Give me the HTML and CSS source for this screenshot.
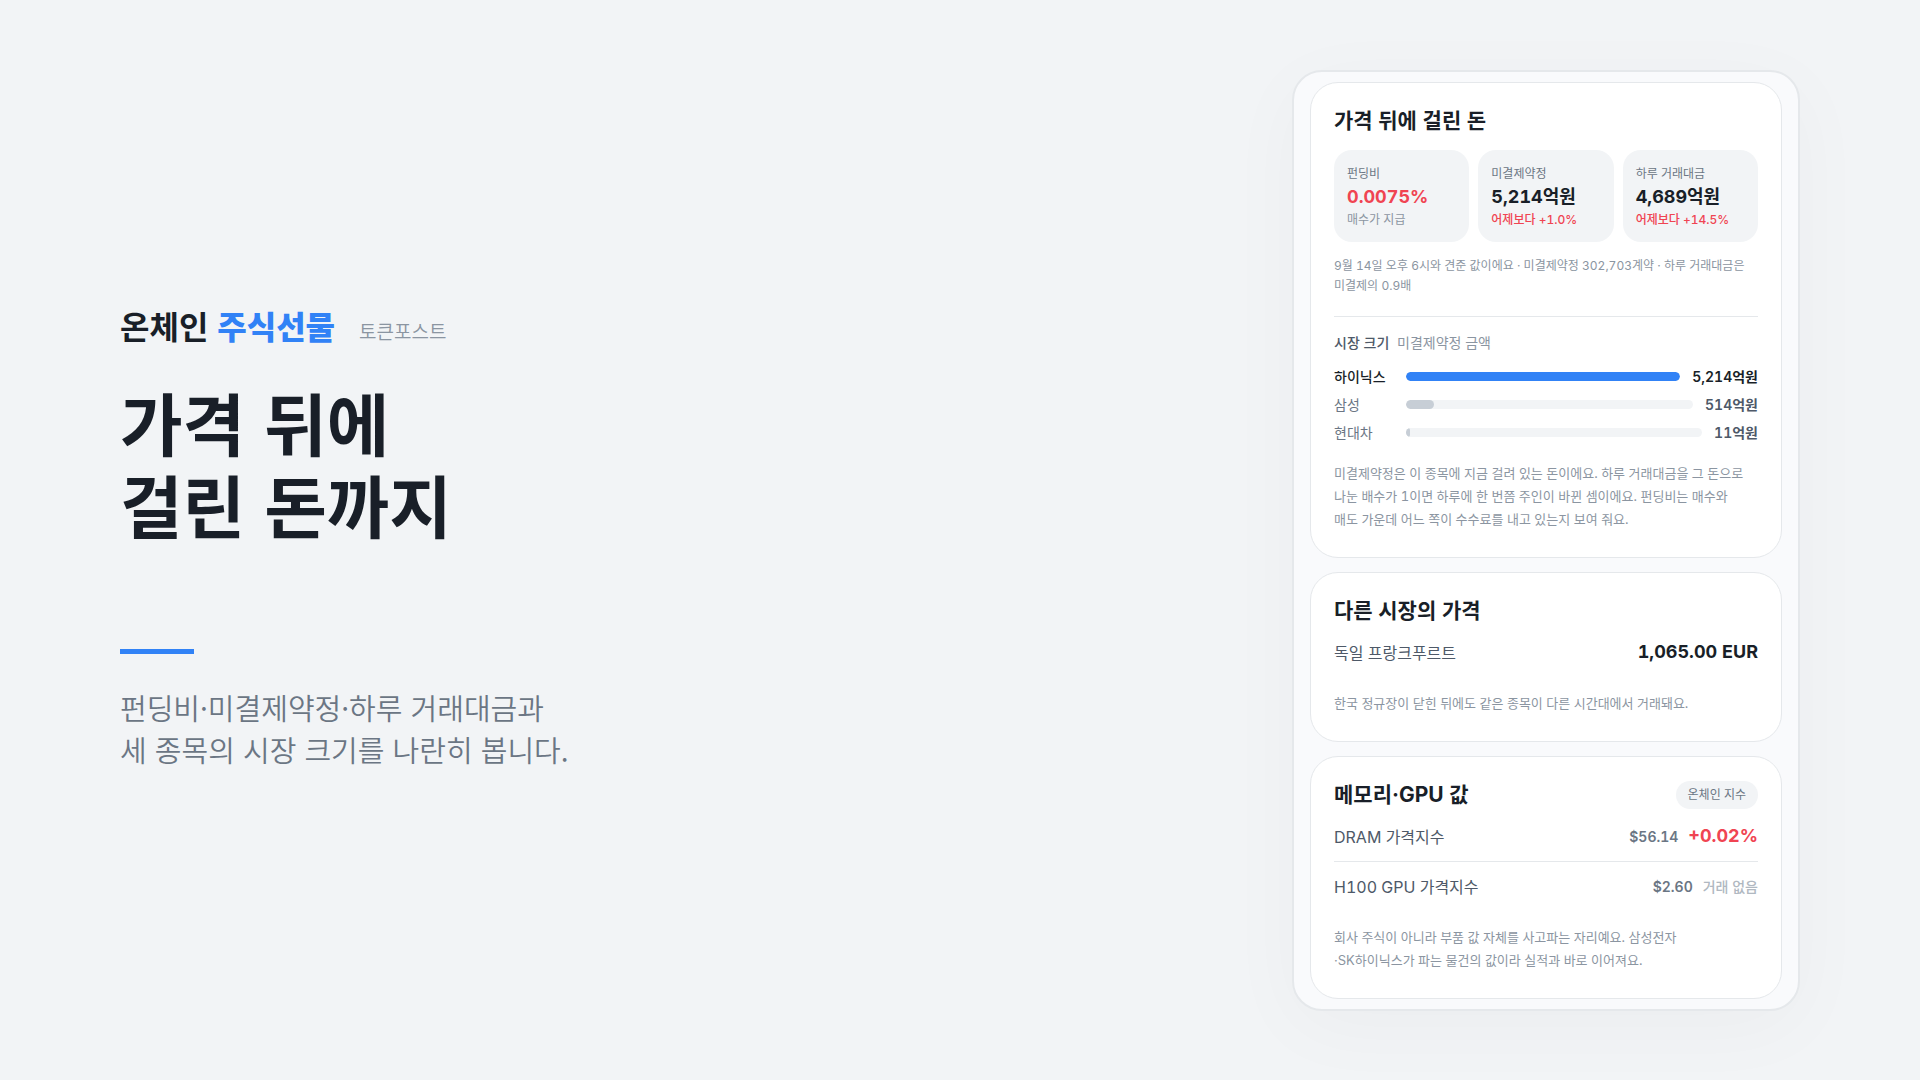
FILE: index.html
```html
<!DOCTYPE html>
<html lang="ko">
<head>
<meta charset="utf-8">
<meta name="viewport" content="width=device-width, initial-scale=1">
<title>온체인 주식선물</title>
<link rel="stylesheet" href="styles.css">
</head>
<body>
<main class="slide">
  <section class="intro">
    <p class="brand"><span class="brand-name">온체인 <strong class="accent">주식선물</strong></span><span class="publisher">토큰포스트</span></p>
    <h1 class="headline">가격 뒤에<br>걸린 돈까지</h1>
    <div class="rule"></div>
    <p class="lead">펀딩비·미결제약정·하루 거래대금과<br>세 종목의 시장 크기를 나란히 봅니다.</p>
  </section>

  <div class="device">
    <section class="card">
      <h2 class="card-title">가격 뒤에 걸린 돈</h2>
      <div class="tiles">
        <div class="tile"><span class="tile-label">펀딩비</span><strong class="tile-value up">0.0075%</strong><span class="tile-sub">매수가 지급</span></div>
        <div class="tile"><span class="tile-label">미결제약정</span><strong class="tile-value">5,214억원</strong><span class="tile-sub change">어제보다 +1.0%</span></div>
        <div class="tile"><span class="tile-label">하루 거래대금</span><strong class="tile-value">4,689억원</strong><span class="tile-sub change">어제보다 +14.5%</span></div>
      </div>
      <p class="caption">9월 14일 오후 6시와 견준 값이에요 · 미결제약정 302,703계약 · 하루 거래대금은<br>미결제의 0.9배</p>
      <div class="market">
        <h3 class="market-title">시장 크기 <span class="market-unit">미결제약정 금액</span></h3>
        <div class="bar-row current"><span class="bar-name">하이닉스</span><div class="track"><div class="fill" style="width:100%"></div></div><span class="bar-value">5,214억원</span></div>
        <div class="bar-row"><span class="bar-name">삼성</span><div class="track"><div class="fill" style="width:9.9%"></div></div><span class="bar-value">514억원</span></div>
        <div class="bar-row"><span class="bar-name">현대차</span><div class="track"><div class="fill" style="width:1.5%"></div></div><span class="bar-value">11억원</span></div>
      </div>
      <p class="note">미결제약정은 이 종목에 지금 걸려 있는 돈이에요. 하루 거래대금을 그 돈으로<br>나눈 배수가 1이면 하루에 한 번쯤 주인이 바뀐 셈이에요. 펀딩비는 매수와<br>매도 가운데 어느 쪽이 수수료를 내고 있는지 보여 줘요.</p>
    </section>

    <section class="card">
      <header class="card-head"><h2 class="card-title">다른 시장의 가격</h2></header>
      <div class="price-row"><span>독일 프랑크푸르트</span><strong class="price">1,065.00 EUR</strong></div>
      <p class="note">한국 정규장이 닫힌 뒤에도 같은 종목이 다른 시간대에서 거래돼요.</p>
    </section>

    <section class="card">
      <header class="card-head"><h2 class="card-title">메모리·GPU 값</h2><span class="pill">온체인 지수</span></header>
      <div class="price-row"><span>DRAM 가격지수</span><span class="quote"><span class="dollar">$56.14</span><strong class="price up">+0.02%</strong></span></div>
      <div class="price-row divided"><span>H100 GPU 가격지수</span><span class="quote"><span class="dollar">$2.60</span><span class="no-trade">거래 없음</span></span></div>
      <p class="note">회사 주식이 아니라 부품 값 자체를 사고파는 자리예요. 삼성전자<br>·SK하이닉스가 파는 물건의 값이라 실적과 바로 이어져요.</p>
    </section>
  </div>
</main>
</body>
</html>
```
FILE: styles.css
```css
* { box-sizing: border-box; }
body, h1, h2, h3, p { margin: 0; }
body {
  background: #f2f4f6;
  color: #191f28;
  font-family: "Inter", "Noto Sans CJK KR", sans-serif;
}
.slide {
  min-height: 100vh;
  display: flex;
  align-items: center;
  justify-content: space-between;
  gap: 48px;
  padding: 48px 120px;
}

.intro {
  padding-bottom: 10px;
  font-family: "Noto Sans CJK KR", sans-serif;
}
.brand {
  display: flex;
  align-items: baseline;
  gap: 24px;
  line-height: 48px;
}
.brand-name { font-size: 32px; font-weight: 700; }
.accent { color: #3182f6; }
.publisher { font-size: 19px; font-weight: 350; color: #8b95a1; }
.headline {
  margin-top: 26px;
  font-size: 68px;
  line-height: 82px;
  font-weight: 700;
}
.rule {
  width: 74px;
  height: 5px;
  margin: 104px 0 32px;
  background: #3182f6;
}
.lead {
  font-size: 29px;
  line-height: 42px;
  font-weight: 350;
  color: #6b7684;
}

.device {
  flex: 0 0 508px;
  display: flex;
  flex-direction: column;
  gap: 14px;
  padding: 10px 16px;
  background: #f9fafc;
  border: 2px solid #e5e8eb;
  border-radius: 30px;
  box-shadow: 0 16px 80px rgba(0, 0, 0, 0.03);
  font-variant-numeric: tabular-nums;
}
.card {
  padding: 24px 23px 26px;
  background: #fff;
  border: 1px solid #e5e8eb;
  border-radius: 28px;
}
.card-head {
  display: flex;
  align-items: center;
  justify-content: space-between;
  margin-bottom: 2px;
}
.card-title { font-size: 21px; line-height: 28px; font-weight: 700; }

.tiles {
  display: grid;
  grid-template-columns: repeat(3, 1fr);
  gap: 9px;
  margin-top: 15px;
}
.tile {
  display: flex;
  flex-direction: column;
  padding: 14px 13px;
  background: #f2f4f6;
  border-radius: 18px;
}
.tile-label { font-size: 12px; line-height: 19px; color: #6b7684; }
.tile-value { font-size: 18px; line-height: 28px; }
.tile-sub { font-size: 12px; line-height: 17px; color: #8b95a1; }
.up { color: #f04452; }
.tile-sub.change { color: #f04452; font-weight: 500; }

.caption {
  margin-top: 14px;
  font-size: 12px;
  line-height: 20px;
  color: #8b95a1;
  white-space: nowrap;
}
.market {
  margin-top: 20px;
  padding-top: 16px;
  border-top: 1px solid #e5e8eb;
}
.market-title {
  margin-bottom: 10px;
  font-size: 14px;
  line-height: 20px;
  font-weight: 500;
  color: #4e5968;
}
.market-unit { margin-left: 4px; font-weight: 400; color: #8b95a1; }
.bar-row {
  display: flex;
  align-items: center;
  font-size: 14px;
  line-height: 28px;
  color: #6b7684;
}
.bar-name { width: 72px; }
.track {
  flex: 1;
  height: 9px;
  overflow: hidden;
  background: #f2f4f6;
  border-radius: 5px;
}
.fill { height: 100%; background: #c7ced6; border-radius: 5px; }
.bar-value { margin-left: 12px; font-weight: 600; color: #4e5968; }
.current .bar-name { font-weight: 500; color: #191f28; }
.current .bar-value { color: #191f28; }
.current .fill { background: #3182f6; }

.note {
  margin-top: 15px;
  font-size: 13px;
  line-height: 23px;
  color: #8b95a1;
  white-space: nowrap;
}

.price-row {
  display: flex;
  align-items: center;
  justify-content: space-between;
  min-height: 50px;
  font-size: 16px;
  color: #4e5968;
}
.divided { border-top: 1px solid #e5e8eb; }
.price { font-size: 18px; color: #191f28; }
.price.up { color: #f04452; }
.quote { display: flex; align-items: baseline; gap: 10px; }
.dollar { font-size: 14px; font-weight: 600; color: #6b7684; }
.no-trade { font-size: 14px; font-weight: 500; color: #b0b8c1; }
.pill {
  padding: 0 12px;
  font-size: 12px;
  line-height: 28px;
  color: #6b7684;
  background: #f2f4f6;
  border-radius: 14px;
}
```
